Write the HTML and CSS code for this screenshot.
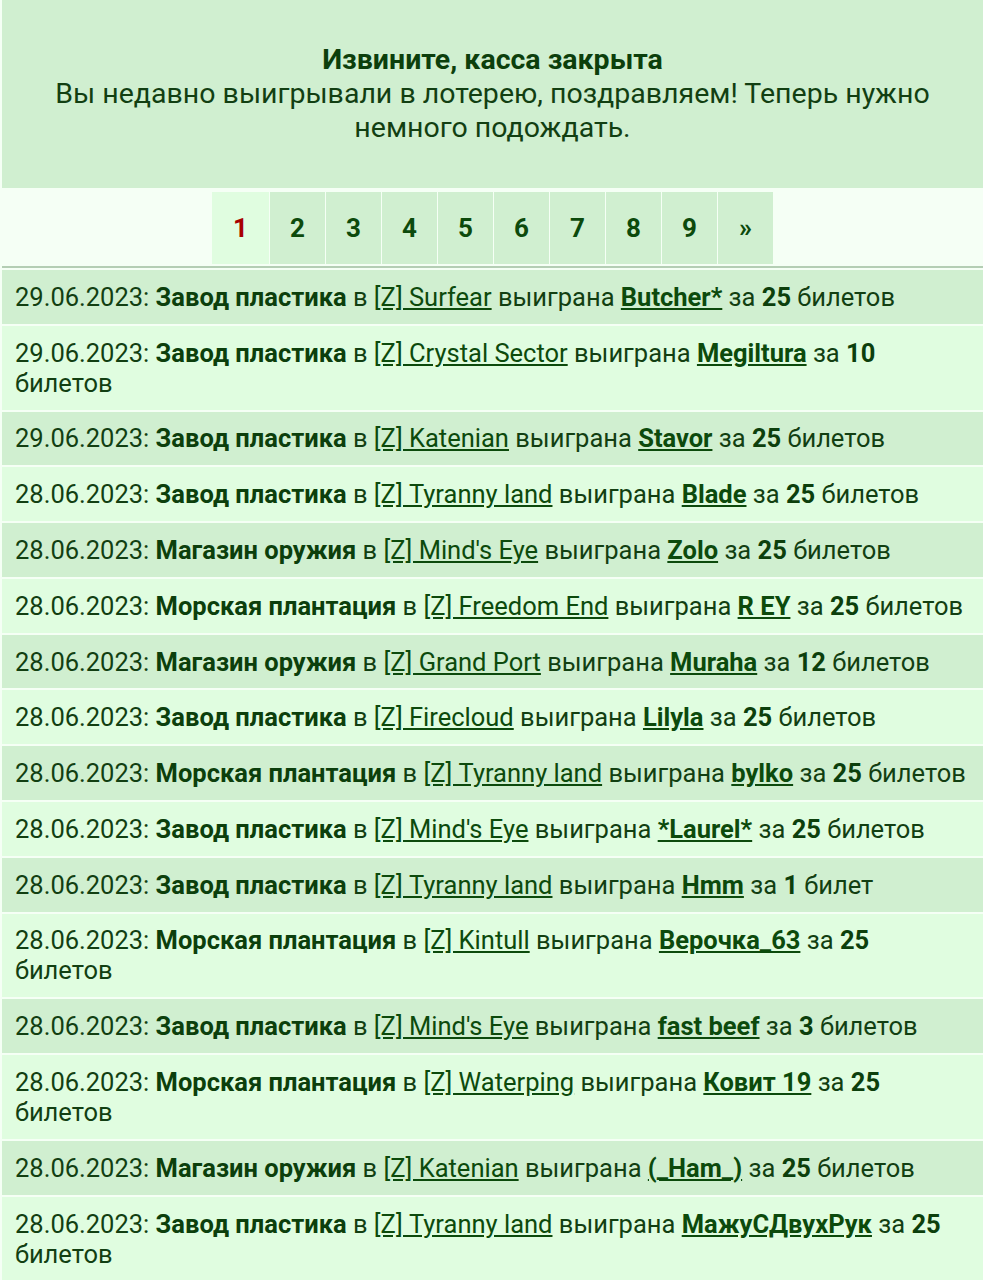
FILE: index.html
```html
<!DOCTYPE html>
<html lang="ru">
<head>
    <meta charset="UTF-8">
    <meta name="viewport" content="width=device-width, initial-scale=1.0">
    <title>Лотерея</title>
    <link rel="stylesheet" href="styles.css">
</head>
<body>

    <div class="notice">
        <div class="notice-title">Извините, касса закрыта</div>
        <div class="notice-text">Вы недавно выигрывали в лотерею, поздравляем! Теперь нужно немного подождать.</div>
    </div>

    <div class="pager">
        <span class="pager-item current">1</span>
        <a class="pager-item" href="#">2</a>
        <a class="pager-item" href="#">3</a>
        <a class="pager-item" href="#">4</a>
        <a class="pager-item" href="#">5</a>
        <a class="pager-item" href="#">6</a>
        <a class="pager-item" href="#">7</a>
        <a class="pager-item" href="#">8</a>
        <a class="pager-item" href="#">9</a>
        <a class="pager-item" href="#">&raquo;</a>
    </div>

    <div class="history">
        <div class="history-row">29.06.2023: <b>Завод пластика</b> в <a href="#">[Z] Surfear</a> выиграна <a class="winner" href="#">Butcher*</a> за <b>25</b> билетов</div>
        <div class="history-row">29.06.2023: <b>Завод пластика</b> в <a href="#">[Z] Crystal Sector</a> выиграна <a class="winner" href="#">Megiltura</a> за <b>10</b> билетов</div>
        <div class="history-row">29.06.2023: <b>Завод пластика</b> в <a href="#">[Z] Katenian</a> выиграна <a class="winner" href="#">Stavor</a> за <b>25</b> билетов</div>
        <div class="history-row">28.06.2023: <b>Завод пластика</b> в <a href="#">[Z] Tyranny land</a> выиграна <a class="winner" href="#">Blade</a> за <b>25</b> билетов</div>
        <div class="history-row">28.06.2023: <b>Магазин оружия</b> в <a href="#">[Z] Mind's Eye</a> выиграна <a class="winner" href="#">Zolo</a> за <b>25</b> билетов</div>
        <div class="history-row">28.06.2023: <b>Морская плантация</b> в <a href="#">[Z] Freedom End</a> выиграна <a class="winner" href="#">R EY</a> за <b>25</b> билетов</div>
        <div class="history-row">28.06.2023: <b>Магазин оружия</b> в <a href="#">[Z] Grand Port</a> выиграна <a class="winner" href="#">Muraha</a> за <b>12</b> билетов</div>
        <div class="history-row">28.06.2023: <b>Завод пластика</b> в <a href="#">[Z] Firecloud</a> выиграна <a class="winner" href="#">Lilyla</a> за <b>25</b> билетов</div>
        <div class="history-row">28.06.2023: <b>Морская плантация</b> в <a href="#">[Z] Tyranny land</a> выиграна <a class="winner" href="#">bylko</a> за <b>25</b> билетов</div>
        <div class="history-row">28.06.2023: <b>Завод пластика</b> в <a href="#">[Z] Mind's Eye</a> выиграна <a class="winner" href="#">*Laurel*</a> за <b>25</b> билетов</div>
        <div class="history-row">28.06.2023: <b>Завод пластика</b> в <a href="#">[Z] Tyranny land</a> выиграна <a class="winner" href="#">Hmm</a> за <b>1</b> билет</div>
        <div class="history-row">28.06.2023: <b>Морская плантация</b> в <a href="#">[Z] Kintull</a> выиграна <a class="winner" href="#">Верочка_63</a> за <b>25</b> билетов</div>
        <div class="history-row">28.06.2023: <b>Завод пластика</b> в <a href="#">[Z] Mind's Eye</a> выиграна <a class="winner" href="#">fast beef</a> за <b>3</b> билетов</div>
        <div class="history-row">28.06.2023: <b>Морская плантация</b> в <a href="#">[Z] Waterping</a> выиграна <a class="winner" href="#">Ковит 19</a> за <b>25</b> билетов</div>
        <div class="history-row">28.06.2023: <b>Магазин оружия</b> в <a href="#">[Z] Katenian</a> выиграна <a class="winner" href="#">(_Ham_)</a> за <b>25</b> билетов</div>
        <div class="history-row">28.06.2023: <b>Завод пластика</b> в <a href="#">[Z] Tyranny land</a> выиграна <a class="winner" href="#">МажуСДвухРук</a> за <b>25</b> билетов</div>
    </div>

</body>
</html>
```

FILE: styles.css
```css
body {
    margin: 0;
    padding: 0 0 0 2px;
    background-color: #f5fff5;
    color: #123f12;
    font-family: Roboto, "Noto Sans", sans-serif;
}

a {
    color: #0c4a0c;
}

b {
    color: #0c3f0c;
}

.notice {
    background-color: #d0efd0;
    text-align: center;
    padding: 43px 20px;
    font-size: 28.5px;
    line-height: 34px;
}

    .notice-title {
        font-weight: bold;
        color: #0c3f0c;
    }

.pager {
    display: flex;
    justify-content: center;
    gap: 1.5px;
    padding: 4px 0 2px;
    border-bottom: 2px solid #b4ceb4;
    margin-bottom: 2px;
}

    .pager-item {
        width: 54.5px;
        height: 72px;
        display: flex;
        align-items: center;
        justify-content: center;
        background-color: #d0efd0;
        color: #0c4a0c;
        font-size: 26px;
        font-weight: bold;
        text-decoration: none;
    }

        .pager-item.current {
            background-color: #e0fde0;
            color: #a80000;
            width: 56.5px;
        }

.history-row {
    background-color: #e0fde0;
    font-size: 25.5px;
    line-height: 30px;
    padding: 11.9px 13px;
    margin-bottom: 2px;
}

    .history-row:nth-child(odd) {
        background-color: #d0efd0;
    }

    .history-row .winner {
        font-weight: bold;
    }
```
